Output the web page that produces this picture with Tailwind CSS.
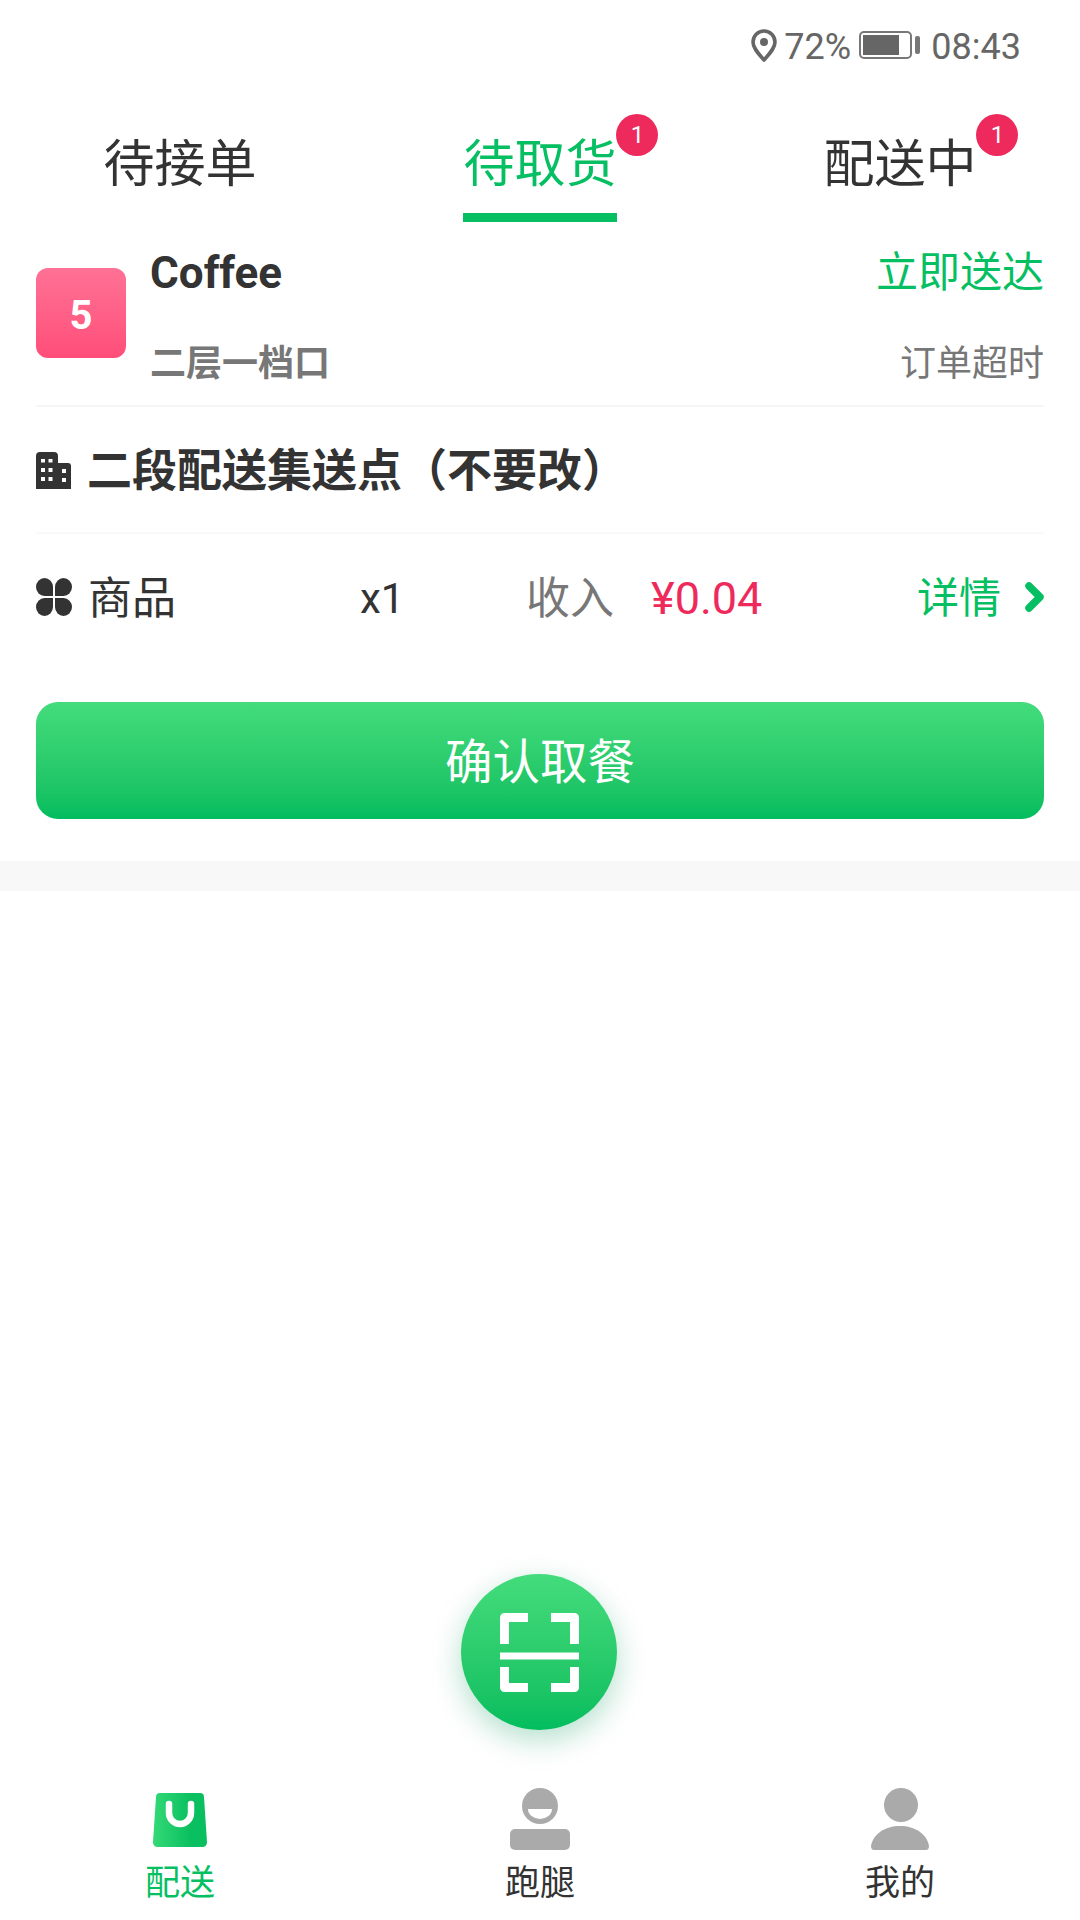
<!DOCTYPE html>
<html lang="en">
<head>
  <meta charset="UTF-8" />
  <meta name="viewport" content="width=device-width, initial-scale=1.0" />
  <title>配送</title>
  <script src="https://cdn.jsdelivr.net/npm/@tailwindcss/browser@4"></script>
</head>
<body class="bg-white font-['Roboto','Noto_Sans_CJK_SC',sans-serif] text-[#333]">
<div class="relative w-[1080px] h-[1920px] flex flex-col overflow-hidden">

  <!-- status bar -->
  <div class="h-[90px] flex items-start justify-end pr-[59px] pt-[29px] text-[36px] leading-[34px] text-[#666]">
    <svg class="w-[26px] h-[33px]" viewBox="0 0 26 33" fill="none">
      <path d="M13 31 C7 24 2 19 2 13 A11 11 0 0 1 24 13 C24 19 19 24 13 31Z" stroke="#666" stroke-width="3.6" stroke-linejoin="round"/>
      <circle cx="13" cy="13" r="4" fill="#666"/>
    </svg>
    <span class="ml-[7px] w-[68px] mt-[1px]">72%</span>
    <div class="ml-[7px] mt-[2px] w-[53px] h-[28px] border-2 border-[#777] rounded-[5px] p-[2px] pr-[11px]">
      <div class="h-full bg-[#666]"></div>
    </div>
    <div class="ml-[3px] mt-[7px] w-[5px] h-[18px] bg-[#777] rounded-[2px]"></div>
    <span class="ml-[11px] mt-[1px]">08:43</span>
  </div>

  <!-- tabs -->
  <div class="h-[132px] grid grid-cols-3 text-[51px] leading-[52px]">
    <div class="flex justify-center pt-[49px]"><span>待接单</span></div>
    <div class="flex justify-center pt-[49px]">
      <div class="relative h-[83px] border-b-[9px] border-[#05bf62] text-[#05bf62]">
        <span>待取货</span>
        <span class="absolute left-[153px] top-[-25px] w-[42px] h-[42px] rounded-full bg-[#ee2a5c] text-white text-[24px] leading-[42px] text-center">1</span>
      </div>
    </div>
    <div class="flex justify-center pt-[49px]">
      <div class="relative h-[50px]">
        <span>配送中</span>
        <span class="absolute left-[153px] top-[-25px] w-[42px] h-[42px] rounded-full bg-[#ee2a5c] text-white text-[24px] leading-[42px] text-center">1</span>
      </div>
    </div>
  </div>

  <!-- order card -->
  <div class="px-[36px]">
    <div class="h-[185px] flex border-b-2 border-[#f6f6f6]">
      <div class="mt-[46px] w-[90px] h-[90px] rounded-[12px] bg-gradient-to-b from-[#ff7195] to-[#ff4d79] text-white text-[40px] font-bold leading-[96px] text-center">5</div>
      <div class="ml-[24px] flex-1 pt-[29px] h-[160px] flex flex-col justify-between">
        <div class="text-[44px] leading-[44px] font-bold">Coffee</div>
        <div class="text-[36px] leading-[36px] font-bold text-[#777]">二层一档口</div>
      </div>
      <div class="pt-[29px] h-[160px] flex flex-col justify-between items-end">
        <div class="text-[42px] leading-[44px] text-[#05bf62]">立即送达</div>
        <div class="text-[36px] leading-[36px] text-[#777]">订单超时</div>
      </div>
    </div>

    <div class="h-[127px] pt-[5px] flex items-center border-b-2 border-[#f9f9f9]">
      <svg class="w-[35px] h-[37px] -mt-[3px]" viewBox="0 0 35 37" fill="#333">
        <path fill-rule="evenodd" d="M0 4 Q0 0 4 0 H18 Q22 0 22 4 V37 H0Z M5 7 V10.5 H9 V7Z M12.500 7 V10.5 H16.500 V7Z M5 16 V20 H9 V16Z M12.500 16 V20 H16.500 V16Z M5 25 V29 H9 V25Z M12.500 25 V29 H16.500 V25Z"/>
        <path fill-rule="evenodd" d="M22 11 H32 Q35 11 35 14 V37 H22Z M26 17 V21 H30 V17Z M26 26 V30 H30 V26Z"/>
      </svg>
      <span class="ml-[16px] text-[45px] leading-[46px] font-bold">二段配送集送点（不要改）</span>
    </div>

    <div class="h-[128px] pt-[2px] flex items-center text-[44px] leading-[44px]">
      <div class="w-[324px] flex items-center">
        <svg class="w-[36px] h-[38px] -mt-[4px]" viewBox="0 0 36 38" fill="#333">
          <path d="M17 18 H8.500 A8.500 9 0 1 1 17 9Z"/>
          <path d="M19 18 H27.500 A8.500 9 0 1 0 19 9Z"/>
          <path d="M17 20 H8.500 A8.500 9 0 1 0 17 29Z"/>
          <path d="M19 20 H27.500 A8.500 9 0 1 1 19 29Z"/>
        </svg>
        <span class="ml-[16px]">商品</span>
      </div>
      <span class="w-[166px] text-[42px]">x1</span>
      <span class="w-[125px] text-[#777]">收入</span>
      <span class="text-[45px] text-[#ee2a5c]">¥0.04</span>
      <span class="ml-auto text-[42px] text-[#05bf62]">详情</span>
      <svg class="ml-[21px] -mr-[1px] w-[23px] h-[30px] -mt-[5px]" viewBox="0 0 23 30" fill="none">
        <path d="M7 4 L18 15 L7 26" stroke="#05bf62" stroke-width="7.5" stroke-linecap="round" stroke-linejoin="round"/>
      </svg>
    </div>

    <div class="mt-[40px] h-[117px] rounded-[22px] bg-gradient-to-b from-[#43dc7c] to-[#00bd5e] text-white text-[47.500px] leading-[122px] text-center">确认取餐</div>
  </div>

  <div class="mt-[42px] h-[30px] bg-[#f8f8f8]"></div>
  <div class="flex-1"></div>

  <!-- bottom nav -->
  <div class="h-[132px] grid grid-cols-3 text-[35px] leading-[34px]">
    <div class="flex flex-col items-center text-[#05bf62]">
      <svg class="mt-[5px] w-[54px] h-[55px]" viewBox="0 0 54 55">
        <defs>
          <linearGradient id="bag" x1="0" y1="0" x2="1" y2="0">
            <stop offset="0" stop-color="#34d977"/>
            <stop offset="0.7" stop-color="#0abf5f"/>
          </linearGradient>
        </defs>
        <path d="M7 0 H47 Q51 0 51 4 L54 49 Q54 54 49 54 H5 Q0 54 0 49 L3 4 Q3 0 7 0Z" fill="url(#bag)"/>
        <path d="M16 11 V20 A11 11 0 0 0 38 20 V11" fill="none" stroke="white" stroke-width="6.5" stroke-linecap="round"/>
      </svg>
      <span class="mt-[19px]">配送</span>
    </div>
    <div class="flex flex-col items-center">
      <svg class="w-[60px] h-[62px]" viewBox="0 0 60 62" fill="#aaa">
        <circle cx="30" cy="18" r="18"/>
        <path d="M18 21 H42 A12 10 0 0 1 18 21Z" fill="white"/>
        <rect x="0" y="41" width="60" height="21" rx="5"/>
      </svg>
      <span class="mt-[17px]">跑腿</span>
    </div>
    <div class="flex flex-col items-center">
      <svg class="w-[58px] h-[62px]" viewBox="0 0 58 62" fill="#aaa">
        <circle cx="30" cy="17" r="17"/>
        <path d="M0 58 C2 46 14 38 29 38 C44 38 56 46 58 58 Q58 62 55 62 H3 Q0 62 0 58Z"/>
      </svg>
      <span class="mt-[17px]">我的</span>
    </div>
  </div>

  <!-- scan button, floats above nav -->
  <div class="absolute left-[461px] top-[1574px] w-[156px] h-[156px] rounded-full bg-gradient-to-b from-[#43dc7c] to-[#00bd5e] shadow-[0_10px_30px_rgba(5,150,90,0.3)] flex items-center justify-center">
    <svg class="w-[79px] h-[79px]" viewBox="0 0 79 79" fill="none" stroke="white" stroke-width="9" stroke-linejoin="round">
      <path d="M28 4.500 H4.500 V31"/>
      <path d="M51 4.500 H74.500 V31"/>
      <path d="M4.500 54 V74.500 H28"/>
      <path d="M74.500 54 V74.500 H51"/>
      <path d="M0 43 H79" stroke-width="7"/>
    </svg>
  </div>
</div>
</body>
</html>
